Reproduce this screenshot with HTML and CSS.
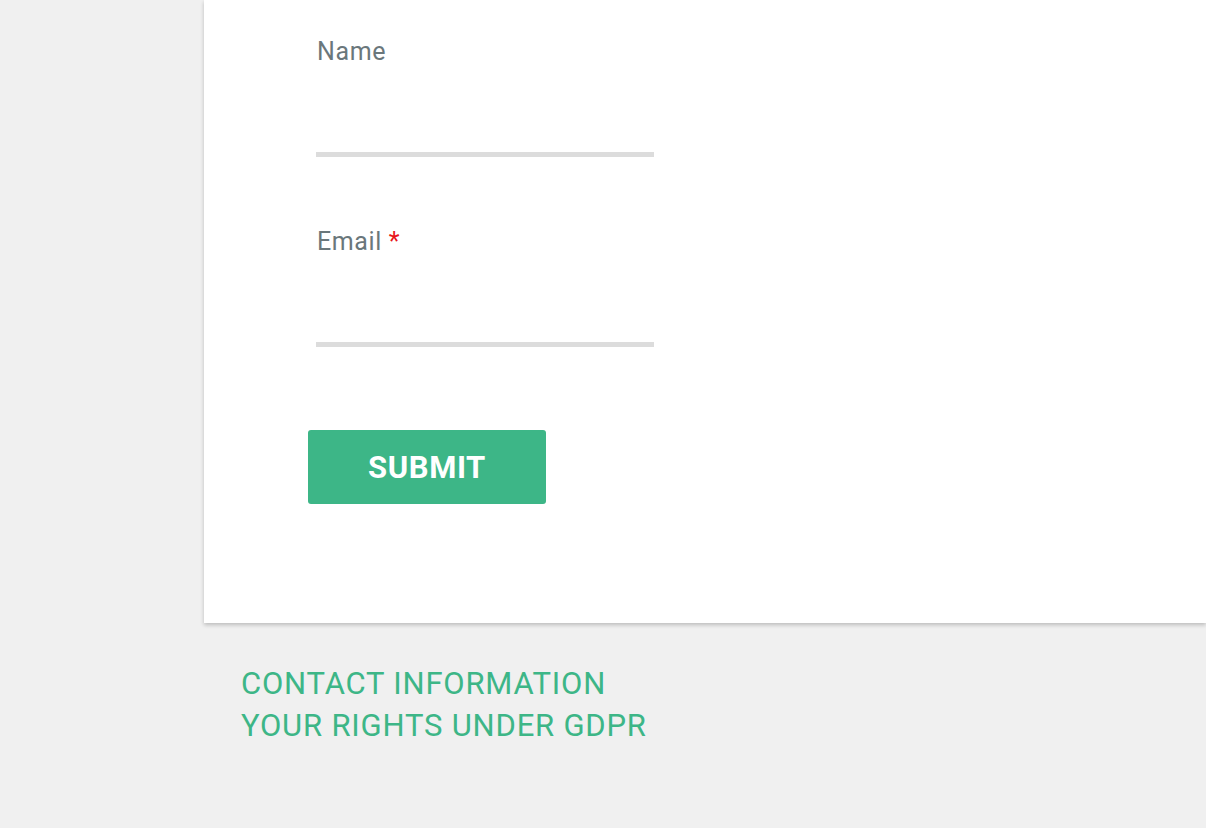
FILE: index.html
```html
<!DOCTYPE html>
<html lang="en">
<head>
<meta charset="utf-8">
<title>Form</title>
<link rel="stylesheet" href="styles.css">
</head>
<body>
<main class="card">
  <form class="form">
    <div class="field">
      <label class="label" for="name">Name</label>
      <input class="input" id="name" type="text">
    </div>
    <div class="field">
      <label class="label" for="email">Email <span class="req">*</span></label>
      <input class="input" id="email" type="email">
    </div>
    <button class="submit" type="button">SUBMIT</button>
  </form>
</main>
<footer class="footer">
  <a class="flink" href="#">CONTACT INFORMATION</a>
  <a class="flink" href="#">YOUR RIGHTS UNDER GDPR</a>
</footer>
</body>
</html>
```
FILE: styles.css
```css
html, body {
  margin: 0;
  padding: 0;
  background: #f0f0f0;
  font-family: Roboto, "Liberation Sans", sans-serif;
  overflow: hidden;
}
.card {
  margin-left: 204px;
  background: #ffffff;
  box-shadow: 0 2px 4px rgba(0, 0, 0, 0.22);
  padding: 38px 0 119px 104px;
}
.form {
  display: flex;
  flex-direction: column;
  align-items: flex-start;
}
.field {
  display: flex;
  flex-direction: column;
  margin-left: 8px;
  width: 338px;
  margin-bottom: 71px;
}
.field:last-of-type {
  margin-bottom: 83px;
}
.label {
  font-size: 25px;
  line-height: 28px;
  letter-spacing: 0.6px;
  color: #6a777b;
  padding-left: 1px;
}
.req {
  color: #e8141b;
}
.input {
  height: 86px;
  border: none;
  border-bottom: 5px solid #dcdcdc;
  background: transparent;
  padding: 0;
  margin: 0;
  box-sizing: content-box;
  outline: none;
  width: 100%;
}
.submit {
  width: 238px;
  height: 74px;
  background: #3db687;
  border: none;
  border-radius: 3px;
  color: #ffffff;
  font-family: Roboto, "Liberation Sans", sans-serif;
  font-size: 31px;
  font-weight: 700;
  letter-spacing: 0.6px;
  padding: 0;
}
.footer {
  display: flex;
  flex-direction: column;
  padding: 40px 0 0 241px;
}
.flink {
  font-size: 31px;
  line-height: 42px;
  letter-spacing: 0.8px;
  color: #3db687;
  text-decoration: none;
}
```
